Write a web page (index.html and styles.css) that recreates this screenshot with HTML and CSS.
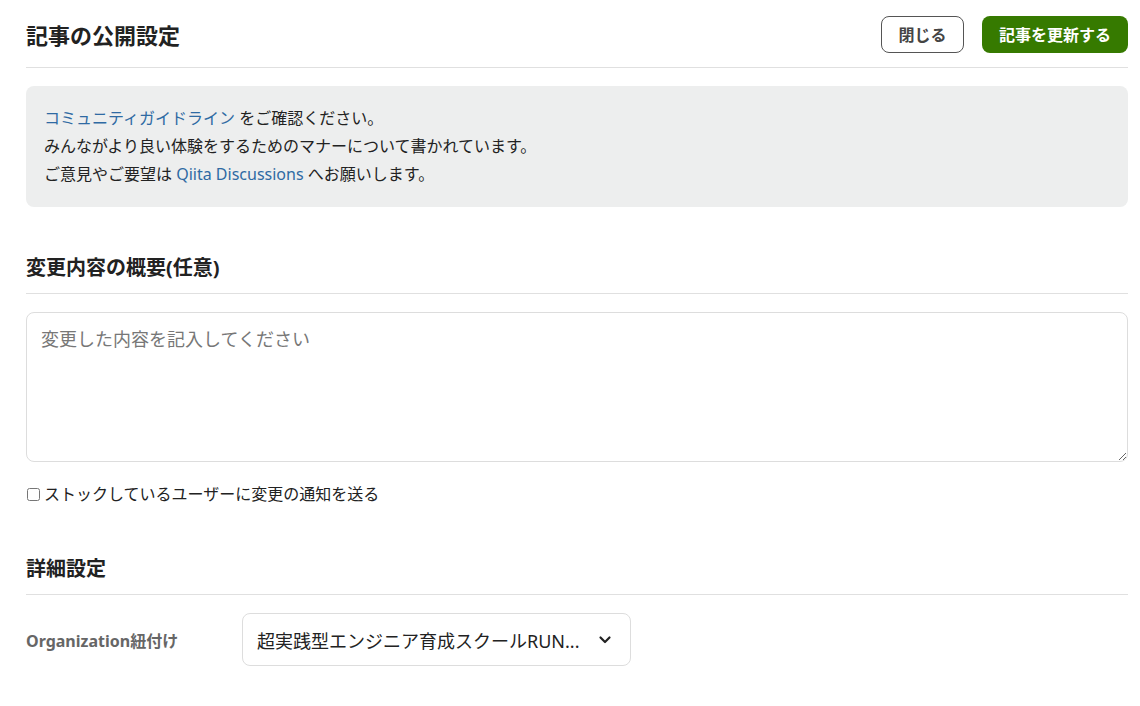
FILE: index.html
```html
<!DOCTYPE html>
<html lang="ja">

<head>

    <meta charset="UTF-8">
    <meta name="viewport" content="width=device-width, initial-scale=1.0">
    <title>記事の公開設定</title>

    <link rel="stylesheet" href="styles.css">

</head>

<body>

    <div class="page">

        <div class="header">

            <h1>記事の公開設定</h1>

            <div class="header-actions">
                <button class="btn-close">閉じる</button>
                <button class="btn-update">記事を更新する</button>
            </div>

        </div>

        <div class="notice">
            <p><a href="#">コミュニティガイドライン</a> をご確認ください。</p>
            <p>みんながより良い体験をするためのマナーについて書かれています。</p>
            <p>ご意見やご要望は <a href="#">Qiita Discussions</a> へお願いします。</p>
        </div>

        <h2 class="section-title">変更内容の概要(任意)</h2>

        <textarea class="summary" placeholder="変更した内容を記入してください"></textarea>

        <label class="notify">
            <input type="checkbox">
            <span>ストックしているユーザーに変更の通知を送る</span>
        </label>

        <h2 class="section-title detail-title">詳細設定</h2>

        <div class="setting-row">

            <span class="setting-label">Organization紐付け</span>

            <div class="select">
                <span>超実践型エンジニア育成スクールRUN...</span>
                <svg width="14" height="14" viewBox="0 0 14 14">
                    <path d="M2.5 4.5 L7 9 L11.5 4.5" fill="none" stroke="#222" stroke-width="2.2" stroke-linecap="round" stroke-linejoin="round" />
                </svg>
            </div>

        </div>

    </div>

</body>

</html>
```

FILE: styles.css
```css
body {
    margin: 0;
    font-family: "Noto Sans", "Noto Sans CJK JP", sans-serif;
    color: #222;
    background-color: #fff;
}

.page {
    padding: 0 12px 0 26px;
}

.header {
    display: flex;
    justify-content: space-between;
    align-items: center;
    height: 67px;
    border-bottom: 1px solid #e0e0e0;
}

h1 {
    margin: 0;
    font-size: 22px;
    font-weight: bold;
    color: #222;
}

.header-actions {
    display: flex;
    gap: 18px;
    margin-top: 1px;
}

button {
    font-family: inherit;
    font-size: 16px;
    font-weight: bold;
    height: 37px;
    border-radius: 8px;
    cursor: pointer;
}

.btn-close {
    width: 83px;
    background-color: #fff;
    color: #444;
    border: 1px solid #555;
}

.btn-update {
    width: 146px;
    padding: 0;
    background-color: #367a00;
    color: #fff;
    border: none;
}

.notice {
    margin-top: 18px;
    background-color: #edeeee;
    border-radius: 8px;
    padding: 18px 18px 19px;
    font-size: 16px;
    line-height: 28px;
    color: #222;
}

.notice p {
    margin: 0;
}

.notice a {
    color: #2f6aa3;
    text-decoration: none;
}

.section-title {
    margin: 47px 0 0;
    padding-bottom: 11px;
    font-size: 20px;
    line-height: 28px;
    border-bottom: 1px solid #e0e0e0;
}

.summary {
    display: block;
    box-sizing: border-box;
    width: 100%;
    height: 150px;
    margin-top: 18px;
    padding: 12px 14px;
    border: 1px solid #ddd;
    border-radius: 8px;
    font-family: inherit;
    font-size: 18px;
    color: #222;
    resize: vertical;
}

.summary::placeholder {
    color: #777;
}

.notify {
    display: flex;
    align-items: center;
    gap: 4px;
    margin-top: 20px;
    font-size: 16px;
    line-height: 24px;
}

.notify input {
    margin: 0 0 0 1px;
    width: 13px;
    height: 13px;
}

.detail-title {
    margin-top: 49px;
}

.setting-row {
    display: flex;
    align-items: center;
    margin-top: 18px;
}

.setting-label {
    width: 216px;
    font-size: 16px;
    font-weight: bold;
    color: #666;
}

.select {
    display: flex;
    justify-content: space-between;
    align-items: center;
    box-sizing: border-box;
    width: 389px;
    height: 53px;
    padding: 0 18px 0 14px;
    border: 1px solid #ddd;
    border-radius: 8px;
    font-size: 18px;
}
```
